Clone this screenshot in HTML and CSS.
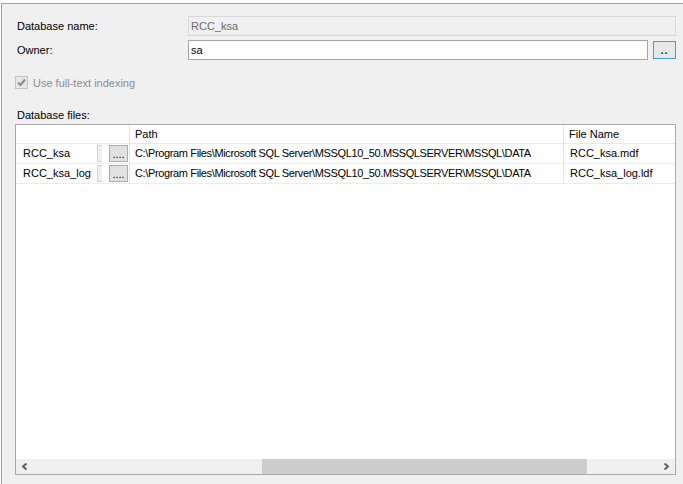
FILE: index.html
```html
<!DOCTYPE html>
<html lang="en">
<head>
  <meta charset="UTF-8" />
  <title>Database Properties - General</title>
  <link rel="stylesheet" href="styles.css">
</head>
<body>
  <div class="panel">
    <div class="form">
      <div class="lbl">Database name:</div>
      <div class="field">
        <div class="textbox disabled">RCC_ksa</div>
      </div>
      <div class="lbl">Owner:</div>
      <div class="field">
        <div class="textbox">sa</div>
        <button class="browse">..</button>
      </div>
    </div>

    <div class="check">
      <span class="box">
        <svg width="11" height="11" viewBox="0 0 11 11"><polyline points="2,5.5 4.5,8 9,2.5" fill="none" stroke="#8a8a8a" stroke-width="2"/></svg>
      </span>
      Use full-text indexing
    </div>

    <div class="files-label">Database files:</div>

    <div class="grid">
      <div class="row head">
        <div class="cell first"></div>
        <div class="cell">Path</div>
        <div class="cell last">File Name</div>
      </div>
      <div class="row">
        <div class="cell first">
          <span class="name">RCC_ksa</span>
          <span class="stub"></span>
          <button class="dots">....</button>
        </div>
        <div class="cell path">C:\Program Files\Microsoft SQL Server\MSSQL10_50.MSSQLSERVER\MSSQL\DATA</div>
        <div class="cell last file">RCC_ksa.mdf</div>
      </div>
      <div class="row">
        <div class="cell first">
          <span class="name">RCC_ksa_log</span>
          <span class="stub"></span>
          <button class="dots">....</button>
        </div>
        <div class="cell path">C:\Program Files\Microsoft SQL Server\MSSQL10_50.MSSQLSERVER\MSSQL\DATA</div>
        <div class="cell last file">RCC_ksa_log.ldf</div>
      </div>
      <div class="filler"></div>
      <!-- horizontal scrollbar -->
      <div class="hscroll">
        <div class="arrow">
          <svg width="7" height="7" viewBox="0 0 7 7"><polyline points="5.5,0.5 2,3.5 5.5,6.5" fill="none" stroke="#606060" stroke-width="2"/></svg>
        </div>
        <div class="track"><div class="thumb"></div></div>
        <div class="arrow">
          <svg width="7" height="7" viewBox="0 0 7 7"><polyline points="1.5,0.5 5,3.5 1.5,6.5" fill="none" stroke="#606060" stroke-width="2"/></svg>
        </div>
      </div>
    </div>
  </div>
</body>
</html>
```

FILE: styles.css
```css
html, body {
  margin: 0;
  height: 100%;
}
body {
  background: #fff;
  font-family: "Liberation Sans", Arial, sans-serif;
  font-size: 11px;
  color: #000;
  overflow: hidden;
}
.panel {
  margin: 3px 0 0 1px;
  height: calc(100% - 3px);
  box-sizing: border-box;
  border-top: 1px solid #a0a0a0;
  border-left: 1px solid #a0a0a0;
  background: #f0f0f0;
  padding: 12px 7px 0 13px;
}
.form {
  display: grid;
  grid-template-columns: 173px 1fr;
  grid-auto-rows: 20px;
  row-gap: 4px;
  align-items: center;
}
.lbl {
  padding-left: 2px;
}
.field {
  display: flex;
  align-items: center;
  height: 20px;
}
.textbox {
  flex: 1;
  height: 20px;
  box-sizing: border-box;
  border: 1px solid #a5a5a5;
  background: #fff;
  padding: 0 2px;
  line-height: 18px;
}
.textbox.disabled {
  border-color: #d9d9d9;
  background: #f0f0f0;
  color: #6d6d6d;
}
.browse {
  width: 23px;
  height: 18px;
  margin-left: 5px;
  box-sizing: border-box;
  border: 1px solid #3c9cf0;
  background: #e8e8e8;
  font: inherit;
  font-weight: bold;
  color: #222;
  padding: 0;
  line-height: 14px;
  letter-spacing: 1px;
}
.check {
  display: flex;
  align-items: center;
  height: 13px;
  margin-top: 16px;
  color: #8d8d8d;
}
.box {
  width: 13px;
  height: 13px;
  box-sizing: border-box;
  border: 1px solid #c4c4c4;
  background: #e6e6e6;
  margin-right: 5px;
  display: flex;
}
.files-label {
  margin-top: 19px;
  margin-left: 2px;
  height: 15px;
  line-height: 15px;
}
.grid {
  margin-top: 1px;
  height: 351px;
  box-sizing: border-box;
  border: 1px solid #a9a9a9;
  background: #fff;
  display: flex;
  flex-direction: column;
}
.row {
  display: grid;
  grid-template-columns: 114px 434px 1fr;
  height: 20px;
  box-sizing: border-box;
  border-bottom: 1px solid #ececec;
}
.row.head {
  height: 19px;
  border-bottom-color: #e3e9f3;
}
.cell {
  border-right: 1px solid #e5e5e5;
  padding-left: 5px;
  line-height: 19px;
  white-space: nowrap;
  overflow: hidden;
}
.cell.path {
  letter-spacing: -0.36px;
}
.head .cell {
  line-height: 18px;
}
.cell.last {
  border-right: none;
}
.cell.file {
  padding-left: 6px;
}
.cell.first {
  display: flex;
  align-items: center;
  padding-left: 7px;
}
.name {
  flex: 1;
}
.stub {
  width: 5px;
  height: 17px;
  box-sizing: border-box;
  border: 1px solid #d2d2d2;
  border-right: none;
  background: #f0f0f0;
  margin-right: 7px;
}
.dots {
  width: 19px;
  height: 17px;
  margin-right: 1px;
  box-sizing: border-box;
  border: 1px solid #adadad;
  background: #e1e1e1;
  font: inherit;
  padding: 0;
  line-height: 12px;
  color: #000;
}
.filler {
  flex: 1;
}
.hscroll {
  height: 15px;
  display: flex;
  background: #f0f0f0;
}
.arrow {
  width: 17px;
  display: flex;
  align-items: center;
  justify-content: center;
}
.track {
  flex: 1;
  position: relative;
}
.thumb {
  position: absolute;
  top: 0;
  bottom: 0;
  left: 229px;
  width: 325px;
  background: #cdcdcd;
}
```
